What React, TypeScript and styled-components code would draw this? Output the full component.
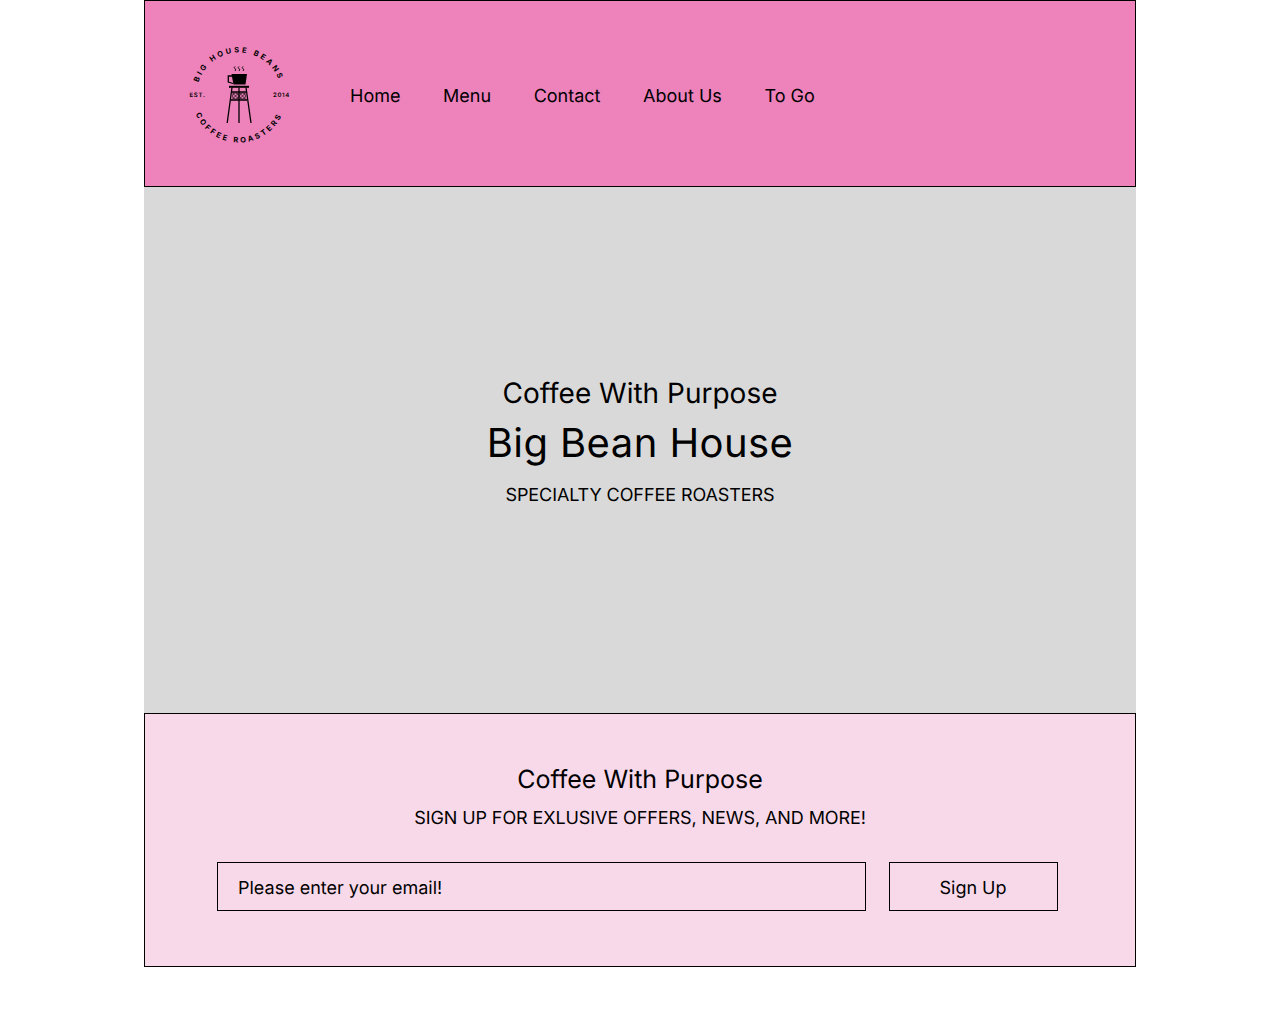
import styled, { createGlobalStyle } from "styled-components";

const NAV_ITEMS = ["Home", "Menu", "Contact", "About Us", "To Go"];

const GlobalStyle = createGlobalStyle`
  * {
    box-sizing: border-box;
  }

  body {
    margin: 0;
    background: #fff;
    color: #000;
    font-family: Inter, "Liberation Sans", sans-serif;
    text-rendering: geometricPrecision;
  }
`;

function Logo() {
  return (
    <LogoSvg viewBox="0 0 110 110" aria-label="Big House Beans logo">
      <defs>
        <path id="logo-top" d="M 12.5 55 A 42.5 42.5 0 0 1 97.5 55" />
        <path id="logo-bottom" d="M 7.5 55 A 47.5 47.5 0 0 0 102.5 55" />
      </defs>
      <LogoText textAnchor="middle">
        <textPath href="#logo-top" startOffset="49.5%">
          BIG HOUSE BEANS
        </textPath>
      </LogoText>
      <LogoText textAnchor="middle">
        <textPath href="#logo-bottom" startOffset="50%">
          COFFEE ROASTERS
        </textPath>
      </LogoText>
      <LogoSide x="5.5" y="57">EST.</LogoSide>
      <LogoSide x="89" y="57">2014</LogoSide>
      {/* steam */}
      <path
        d="M51 26.5 q-1.6 1.1 0 2.2 q1.6 1.1 0 2.2 M55 26.5 q-1.6 1.1 0 2.2 q1.6 1.1 0 2.2 M59 26.5 q-1.6 1.1 0 2.2 q1.6 1.1 0 2.2"
        fill="none"
        stroke="#000"
        strokeWidth="1"
      />
      {/* cup */}
      <path d="M47.5 34 H63 L61.5 44.5 H49.5 Z" fill="#000" />
      <path d="M48 36 H44.3 V42 L49 43.5" fill="none" stroke="#000" strokeWidth="1.3" />
      <rect x="45" y="45.8" width="20" height="2" fill="#000" />
      {/* tower */}
      <path
        d="M48 47.5 L43.2 83 M62 47.5 L67 83 M55 47.5 V83 M48 52 H62 M47 60 H63"
        fill="none"
        stroke="#000"
        strokeWidth="1.3"
      />
      <path
        d="M48 52.5 L55 59.5 M55 52.5 L48 59.5 M55 52.5 L62 59.5 M62 52.5 L55 59.5"
        fill="none"
        stroke="#000"
        strokeWidth="0.7"
      />
      <circle cx="51.5" cy="56" r="3" fill="none" stroke="#000" strokeWidth="0.7" />
      <circle cx="58.5" cy="56" r="3" fill="none" stroke="#000" strokeWidth="0.7" />
    </LogoSvg>
  );
}

export default function App() {
  return (
    <Page>
      <GlobalStyle />
      <Header>
        <Logo />
        <Nav>
          {NAV_ITEMS.map((item) => (
            <NavLink key={item} href="#">
              {item}
            </NavLink>
          ))}
        </Nav>
      </Header>
      <Hero>
        <HeroKicker>Coffee With Purpose</HeroKicker>
        <HeroTitle>Big Bean House</HeroTitle>
        <HeroSub>SPECIALTY COFFEE ROASTERS</HeroSub>
      </Hero>
      <Signup>
        <SignupTitle>Coffee With Purpose</SignupTitle>
        <SignupSub>SIGN UP FOR EXLUSIVE OFFERS, NEWS, AND MORE!</SignupSub>
        <SignupForm>
          <EmailInput type="text" placeholder="Please enter your email!" />
          <SignupButton type="button">Sign Up</SignupButton>
        </SignupForm>
      </Signup>
    </Page>
  );
}

const Page = styled.div`
  width: 992px;
  margin: 0 auto;
  display: flex;
  flex-direction: column;
`;

const Header = styled.header`
  height: 187px;
  display: flex;
  align-items: center;
  gap: 56px;
  padding: 3px 0 0 39px;
  background: #ee82bb;
  border: 1px solid #000;
`;

const LogoSvg = styled.svg`
  width: 110px;
  height: 110px;
  flex-shrink: 0;
`;

const LogoText = styled.text`
  font-family: Inter, "Liberation Sans", sans-serif;
  font-size: 7.5px;
  font-weight: 700;
  letter-spacing: 2.55px;
  fill: #000;
`;

const LogoSide = styled.text`
  font-family: Inter, "Liberation Sans", sans-serif;
  font-size: 6px;
  font-weight: 600;
  letter-spacing: 0.7px;
  fill: #000;
`;

const Nav = styled.nav`
  display: flex;
  align-items: center;
  gap: 42.6px;
  padding-top: 4px;
`;

const NavLink = styled.a`
  font-size: 18px;
  line-height: 22px;
  color: #000;
  text-decoration: none;
`;

const Hero = styled.section`
  height: 526px;
  display: flex;
  flex-direction: column;
  align-items: center;
  justify-content: center;
  padding-bottom: 18px;
  background: #d9d9d9;
`;

const HeroKicker = styled.p`
  margin: 0;
  font-size: 28px;
  line-height: 34px;
`;

const HeroTitle = styled.h1`
  margin: 9px 0 0;
  font-size: 40px;
  font-weight: 400;
  line-height: 48px;
  letter-spacing: 0.43px;
`;

const HeroSub = styled.p`
  margin: 18px 0 0;
  font-size: 18px;
  line-height: 22px;
  letter-spacing: -0.08px;
`;

const Signup = styled.section`
  height: 254px;
  display: flex;
  flex-direction: column;
  align-items: center;
  padding-top: 51px;
  background: #f8d9ea;
  border: 1px solid #000;
`;

const SignupTitle = styled.h2`
  margin: 0;
  font-size: 25px;
  font-weight: 400;
  line-height: 30px;
`;

const SignupSub = styled.p`
  margin: 13px 0 0;
  font-size: 18px;
  line-height: 22px;
  letter-spacing: -0.09px;
`;

const SignupForm = styled.form`
  display: flex;
  gap: 23px;
  margin: 32px 0 0 -6px;
`;

const EmailInput = styled.input`
  width: 649px;
  height: 49px;
  padding: 3px 20px 0 20.5px;
  background: transparent;
  border: 1px solid #000;
  border-radius: 0;
  font-family: inherit;
  font-size: 18px;
  color: #000;
  text-rendering: geometricPrecision;

  &::placeholder {
    color: #000;
    opacity: 1;
  }
`;

const SignupButton = styled.button`
  width: 169px;
  height: 49px;
  padding: 3px 0 0;
  background: transparent;
  border: 1px solid #000;
  border-radius: 0;
  font-family: inherit;
  font-size: 18px;
  color: #000;
  text-rendering: geometricPrecision;
`;
